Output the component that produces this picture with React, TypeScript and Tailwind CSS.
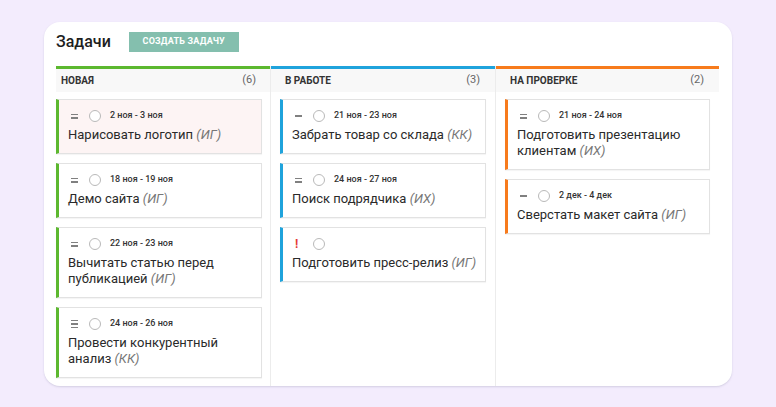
import React from "react";

type Task = {
  priority: "low" | "mid" | "high" | "urgent";
  dates?: string;
  title: string;
  who: string;
  highlight?: boolean;
};

type Column = {
  name: string;
  count: number;
  bar: string;
  border: string;
  tasks: Task[];
  cls: string;
};

const columns: Column[] = [
  {
    name: "Новая",
    count: 6,
    bar: "bg-[#5cb82f]",
    border: "border-l-[#5cb82f]",
    cls: "w-[214px] pr-[8px]",
    tasks: [
      { priority: "mid", dates: "2 ноя - 3 ноя", title: "Нарисовать логотип", who: "ИГ", highlight: true },
      { priority: "mid", dates: "18 ноя - 19 ноя", title: "Демо сайта", who: "ИГ" },
      { priority: "mid", dates: "22 ноя - 23 ноя", title: "Вычитать статью перед публикацией", who: "ИГ" },
      { priority: "high", dates: "24 ноя - 26 ноя", title: "Провести конкурентный анализ", who: "КК" },
    ],
  },
  {
    name: "В работе",
    count: 3,
    bar: "bg-[#1fa3dc]",
    border: "border-l-[#1fa3dc]",
    cls: "w-[225px] px-[9px] border-l border-[#ececec]",
    tasks: [
      { priority: "low", dates: "21 ноя - 23 ноя", title: "Забрать товар со склада", who: "КК" },
      { priority: "mid", dates: "24 ноя - 27 ноя", title: "Поиск подрядчика", who: "ИХ" },
      { priority: "urgent", title: "Подготовить пресс-релиз", who: "ИГ" },
    ],
  },
  {
    name: "На проверке",
    count: 2,
    bar: "bg-[#f77b1c]",
    border: "border-l-[#f77b1c]",
    cls: "w-[224px] px-[9px] border-l border-[#ececec]",
    tasks: [
      { priority: "mid", dates: "21 ноя - 24 ноя", title: "Подготовить презентацию клиентам", who: "ИХ" },
      { priority: "low", dates: "2 дек - 4 дек", title: "Сверстать макет сайта", who: "ИГ" },
    ],
  },
];

function PriorityIcon({ level }: { level: Task["priority"] }) {
  if (level === "urgent") {
    return <span className="w-[7px] text-[12px] font-bold leading-none text-[#e53935]">!</span>;
  }
  const lines = level === "low" ? 1 : level === "mid" ? 2 : 3;
  return (
    <span className="flex w-[7px] flex-col justify-center gap-[2px]">
      {Array.from({ length: lines }).map((_, i) => (
        <span key={i} className="block h-[1.5px] w-[7px] bg-[#808080]" />
      ))}
    </span>
  );
}

function TaskCard({ task, border }: { task: Task; border: string }) {
  return (
    <div
      className={`border border-[#e2e2e2] border-l-[3px] ${border} ${
        task.highlight ? "bg-[#fdf4f4]" : "bg-white"
      } pl-[9px] pr-[8px] pt-[10px] pb-[10px] shadow-[0_1px_1px_rgba(0,0,0,0.04)]`}
    >
      <div className="flex h-[12px] items-center pl-[3px]">
        <PriorityIcon level={task.priority} />
        <span className="ml-[11px] h-[12px] w-[12px] rounded-full border border-[#b9b9b9] bg-white" />
        {task.dates && <span className="ml-[9px] text-[9px] font-medium text-[#333]">{task.dates}</span>}
      </div>
      <p className="mt-[5px] text-[13px] leading-[16px] text-[#2a2a2a]">
        {task.title} <span className="italic text-[#777]">({task.who})</span>
      </p>
    </div>
  );
}

export default function App() {
  return (
    <div
      className="flex h-[407px] w-[776px] items-start justify-start bg-[#f3ecfd] pl-[44px] pt-[22px]"
      style={{ fontFamily: "Roboto, 'Liberation Sans', sans-serif" }}
    >
      <div className="flex h-[364px] w-[688px] flex-col rounded-[16px] bg-white pl-[12px] pt-[10px] shadow-[0_1px_2px_rgba(120,120,150,0.25)]">
        {/* Header */}
        <div className="flex h-[20px] items-center gap-[18px]">
          <h1 className="text-[16px] font-medium leading-[20px] text-[#1e1e1e]">Задачи</h1>
          <button className="h-[20px] w-[110px] bg-[#84bfae] text-[9px] font-bold uppercase tracking-[0.2px] text-white">
            Создать задачу
          </button>
        </div>

        {/* Board */}
        <div className="mt-[14px] flex flex-1">
          {columns.map((col) => (
            <div key={col.name} className={`flex flex-col ${col.cls}`}>
              <div className={`-mx-[9px] h-[3px] ${col.bar} ${col.name === "Новая" ? "ml-0 mr-[-8px]" : ""}`} />
              <div
                className={`flex h-[23px] items-center justify-between bg-[#f8f8f8] pl-[5px] pr-[6px] ${
                  col.name === "Новая" ? "-mr-[8px] pr-[14px]" : "-mx-[9px] pl-[14px] pr-[15px]"
                }`}
              >
                <span className="text-[10px] font-bold uppercase text-[#333]">{col.name}</span>
                <span className="text-[11px] text-[#666]">({col.count})</span>
              </div>
              <div className="mt-[7px] flex flex-col gap-[9px]">
                {col.tasks.map((t) => (
                  <TaskCard key={t.title} task={t} border={col.border} />
                ))}
              </div>
            </div>
          ))}
        </div>
      </div>
    </div>
  );
}
